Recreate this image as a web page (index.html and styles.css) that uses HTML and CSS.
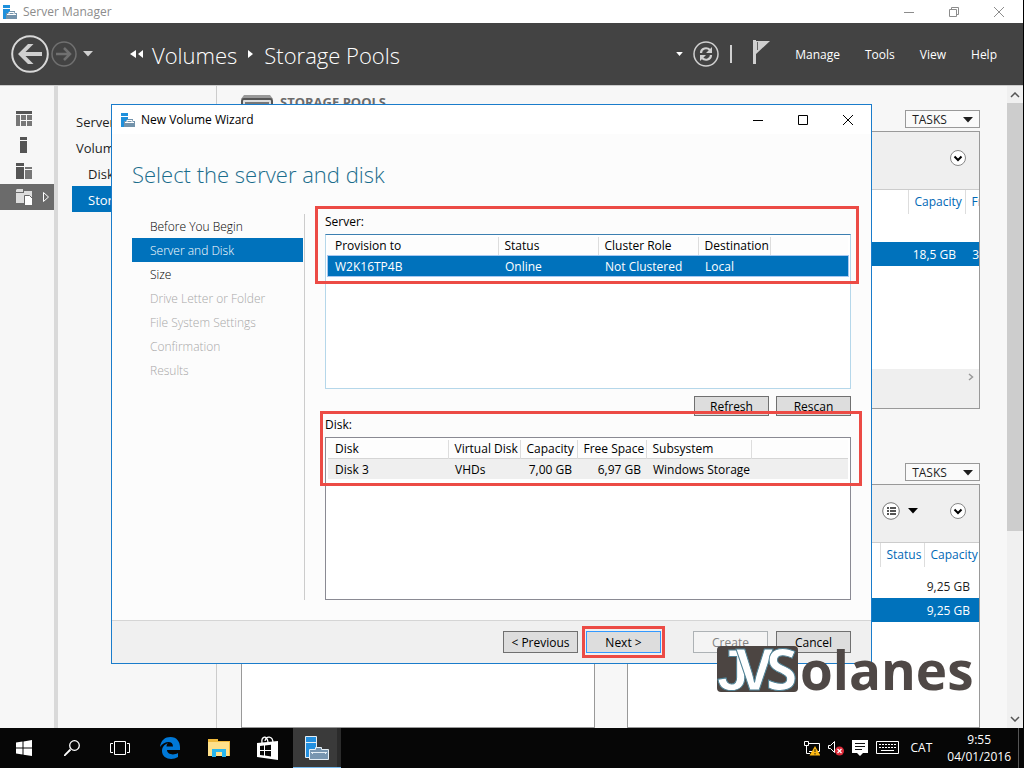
FILE: index.html
```html
<!DOCTYPE html>
<html lang="en">
<head>
<meta charset="utf-8">
<title>Server Manager</title>
<link rel="stylesheet" href="styles.css">
</head>
<body>
<svg class="defs" aria-hidden="true">
  <symbol id="logo" viewBox="0 0 14 14"><path fill="#1e90dc" d="M0 0h7v3H0zM0 4h7v3L3 9v5H0z"/><path fill="#7393ab" d="M3 8h3V6h6v2h2v6H3z"/><path stroke="#fff" fill="none" d="M4 9.500h9M6 9V7.500h5V9"/></symbol>
  <symbol id="tri" viewBox="0 0 10 6"><path fill="currentColor" d="M0 0h10L5 5.500z"/></symbol>
  <symbol id="chev" viewBox="0 0 16 16"><circle cx="8" cy="8" r="7.500" fill="#fff" stroke="#888"/><path d="M4.500 6.500 8 10l3.500-3.500" fill="none" stroke="#000" stroke-width="2"/></symbol>
</svg>
<div class="desktop">
  <div class="window">
    <header class="titlebar">
      <svg class="app-icon"><use href="#logo"/></svg>
      <span class="title">Server Manager</span>
      <div class="controls">
        <button aria-label="Minimize"><svg width="12" height="12"><path d="M1 6.500h10"/></svg></button>
        <button aria-label="Restore"><svg width="12" height="12"><path d="M1.500 3.500h7v7h-7zM3.500 3V1.500h7v7H9"/></svg></button>
        <button aria-label="Close"><svg width="12" height="12"><path d="m1 1 10 10M11 1 1 11"/></svg></button>
      </div>
    </header>
    <div class="topbar">
      <button class="back" aria-label="Back"><svg width="38" height="38"><circle cx="19" cy="19" r="17.800" fill="none" stroke="#d8d8d8" stroke-width="2"/><path fill="#d0d0d0" d="M31 17H14.500l8-8H17L7 19l10 10h5.500l-8-8H31z"/></svg></button>
      <button class="forward" aria-label="Forward"><svg width="26" height="26"><circle cx="13" cy="13" r="12" fill="none" stroke="#707070" stroke-width="1.500"/><path d="M5 13h14M13 7l6 6-6 6" fill="none" stroke="#707070" stroke-width="2.500"/></svg></button>
      <button class="history" aria-label="History"><svg width="10" height="6"><use href="#tri"/></svg></button>
      <nav class="crumbs">
        <svg width="14" height="8"><path fill="#fff" d="M6 0v8L0 4zM13 0v8L8 4z"/></svg>
        <a href="#">Volumes</a>
        <svg width="5" height="8"><path fill="#fff" d="M0 0v8l5-4z"/></svg>
        <a href="#">Storage Pools</a>
      </nav>
      <button class="small-drop" aria-label="Options"><svg width="7" height="4" viewBox="0 0 10 6"><path fill="#fff" d="M0 0h10L5 6z"/></svg></button>
      <button class="refresh" aria-label="Refresh"><svg width="26" height="26"><circle cx="13" cy="13" r="12" fill="none" stroke="#d0d0d0" stroke-width="1.500"/><path d="M8 12c0-5 6-6 9-3M18 14c0 5-6 6-9 3" fill="none" stroke="#d0d0d0" stroke-width="2.200"/><path fill="#d0d0d0" d="M19 6v6h-6zM7 20v-6h6z"/></svg></button>
      <span class="sep"></span>
      <button class="flag" aria-label="Notifications"><svg width="18" height="24"><path fill="#d0d0d0" d="M1 0h3v24H1zM4 1h14L4 14z"/><path stroke="#666" d="M5.500 2v8"/></svg></button>
      <nav class="menu"><a href="#">Manage</a><a href="#">Tools</a><a href="#">View</a><a href="#">Help</a></nav>
    </div>
    <div class="workspace">
      <aside class="rail">
        <button aria-label="Dashboard"><svg width="16" height="16"><path fill="#555" d="M0 0h16v3H0z"/><path fill="#777" d="M0 4h4v11H0zM5 4h5v5H5zM11 4h5v5h-5zM5 10h5v5H5zM11 10h5v5h-5z"/></svg></button>
        <button aria-label="Local server"><svg width="16" height="16"><path fill="#555" d="M4 0h7v3H4zM4 4h7v12H4z"/></svg></button>
        <button aria-label="All servers"><svg width="16" height="16"><path fill="#555" d="M0 0h8v3H0zM0 4h8v12H0z"/><path fill="#777" d="M9 4h7v2H9zM9 7h7v9H9z"/></svg></button>
        <button class="active" aria-label="File services"><svg width="16" height="16"><path fill="#ddd" d="M0 1 1 0h6v3H0zM0 4h8V2h8v12H0z"/><path fill="#fff" stroke="#666" d="M8.500 6.500h5l3 3v7h-8z"/></svg><svg class="rail-arrow" width="8" height="12"><path fill="none" stroke="#fff" d="M1.500 1.500v9L6.500 6z"/></svg></button>
      </aside>
      <nav class="sections">
        <a href="#">Servers</a><a href="#">Volumes</a><a class="sub" href="#">Disks</a><a class="sub selected" href="#">Storage Pools</a>
      </nav>
      <main class="tiles">
        <section class="tile pools">
          <div class="tile-head">
            <svg width="32" height="16"><path fill="#999" d="M3 0h26l3 4H0z"/><rect x="1" y="4" width="30" height="20" rx="2" fill="#ddd" stroke="#555" stroke-width="2"/><path stroke="#777" stroke-width="2" d="M4 8h24M4 12h24"/></svg>
            <h2>STORAGE POOLS</h2>
            <button class="tasks">TASKS <svg width="10" height="6"><use href="#tri"/></svg></button>
          </div>
          <div class="panel">
            <div class="toolbar"><button aria-label="Expand"><svg width="16" height="16"><use href="#chev"/></svg></button></div>
            <table>
              <colgroup><col><col class="c57"><col class="c14"></colgroup>
              <thead><tr><th></th><th>Capacity</th><th>Free</th></tr></thead>
              <tbody><tr class="gap"><td colspan="3"></td></tr><tr class="selected"><td></td><td>18,5 GB</td><td class="cut">3</td></tr></tbody>
            </table>
            <div class="hscroll"><svg width="6" height="8"><path d="m1 1 3.500 3L1 7" fill="none" stroke="#999" stroke-width="1.500"/></svg></div>
          </div>
        </section>
        <div class="lower">
          <section class="tile"><div class="tile-head"></div><div class="panel"></div></section>
          <section class="tile">
            <div class="tile-head"><button class="tasks">TASKS <svg width="10" height="6"><use href="#tri"/></svg></button></div>
            <div class="panel">
              <div class="toolbar">
                <button aria-label="List"><svg width="18" height="18"><circle cx="9" cy="9" r="8.300" fill="#fff" stroke="#777"/><path d="M5 6h2M8 6h6M5 9h2M8 9h6M5 12h2M8 12h6" stroke="#555" stroke-width="2"/></svg></button>
                <button class="list-drop" aria-label="List options"><svg width="10" height="6"><use href="#tri"/></svg></button>
                <button aria-label="Expand"><svg width="16" height="16"><use href="#chev"/></svg></button>
              </div>
              <table class="disks">
                <colgroup><col><col class="c44"><col class="c54"></colgroup>
                <thead><tr><th></th><th>Status</th><th>Capacity</th></tr></thead>
                <tbody><tr><td></td><td></td><td>9,25 GB</td></tr><tr class="selected"><td></td><td></td><td>9,25 GB</td></tr></tbody>
              </table>
            </div>
          </section>
        </div>
      </main>
      <div class="vscroll"><svg width="10" height="6"><path d="m1 5 4-4 4 4"/></svg><i></i><svg width="10" height="6"><path d="m1 1 4 4 4-4"/></svg></div>
    </div>
  </div>

  <div class="dialog" role="dialog" aria-label="New Volume Wizard">
    <header class="dialog-title">
      <svg class="app-icon"><use href="#logo"/></svg>
      <span>New Volume Wizard</span>
      <div class="controls">
        <button aria-label="Minimize"><svg width="12" height="12"><path d="M1 6.500h10"/></svg></button>
        <button aria-label="Maximize"><svg width="12" height="12"><path d="M1.500 1.500h9v9h-9z"/></svg></button>
        <button aria-label="Close"><svg width="12" height="12"><path d="m1 1 10 10M11 1 1 11"/></svg></button>
      </div>
    </header>
    <h1>Select the server and disk</h1>
    <div class="wizard">
      <ol class="steps">
        <li>Before You Begin</li><li class="current">Server and Disk</li><li>Size</li><li class="off">Drive Letter or Folder</li><li class="off">File System Settings</li><li class="off">Confirmation</li><li class="off">Results</li>
      </ol>
      <div class="form">
        <div class="mark mark-server"></div>
        <div class="mark mark-disk"></div>
        <p class="label" id="server-label">Server:</p>
        <div class="list server">
          <table aria-labelledby="server-label">
            <colgroup><col class="c170"><col class="c100"><col class="c100"><col class="c72"><col></colgroup>
            <thead><tr><th>Provision to</th><th>Status</th><th>Cluster Role</th><th>Destination</th><th></th></tr></thead>
            <tbody><tr><td>W2K16TP4B</td><td>Online</td><td>Not Clustered</td><td>Local</td><td></td></tr></tbody>
          </table>
        </div>
        <div class="actions"><button class="btn">Refresh</button><button class="btn">Rescan</button></div>
        <p class="label" id="disk-label">Disk:</p>
        <div class="list disk">
          <table aria-labelledby="disk-label">
            <colgroup><col class="c120"><col class="c72"><col class="c57"><col class="c69"><col class="c105"><col></colgroup>
            <thead><tr><th>Disk</th><th>Virtual Disk</th><th>Capacity</th><th>Free Space</th><th>Subsystem</th><th></th></tr></thead>
            <tbody><tr><td>Disk 3</td><td>VHDs</td><td class="num">7,00 GB</td><td class="num">6,97 GB</td><td>Windows Storage</td><td></td></tr></tbody>
          </table>
        </div>
      </div>
    </div>
    <footer class="dialog-foot">
      <button class="btn">&lt; Previous</button>
      <span class="next-wrap"><button class="btn next">Next &gt;</button></span>
      <button class="btn create" disabled>Create</button>
      <button class="btn">Cancel</button>
    </footer>
  </div>

  <svg class="watermark" width="260" height="60" role="img" aria-label="JVSolanes">
    <rect x="1" y="6" width="81" height="46" rx="4" fill="#4c4542"/>
    <g class="wm-light"><text class="wm-j" x="1" y="50">J</text><text x="20" y="50">V</text><text x="50" y="50">S</text></g>
    <text class="wm-dark" x="84" y="50">olanes</text>
  </svg>

  <div class="taskbar">
    <button aria-label="Start"><svg width="16" height="16"><path fill="#fff" d="m0 2.500 6.500-1v6H0zM7.500 1.400 16 0v7.500H7.500zM0 8.500h6.500v6l-6.500-1zM7.500 8.500H16V16l-8.500-1.200z"/></svg></button>
    <button aria-label="Search"><svg width="16" height="16"><path d="M6.500 9.500 0 16" stroke="#fff" stroke-width="1.800"/><circle cx="10.500" cy="5.500" r="4.800" fill="none" stroke="#fff" stroke-width="1.300"/></svg></button>
    <button aria-label="Task view"><svg width="20" height="14"><path d="M4.500.500h11v13h-11zM3 2.500H.500v9H3M17 2.500h2.500v9H17" fill="none" stroke="#fff"/></svg></button>
    <div class="apps">
      <button aria-label="Edge"><svg width="20" height="22"><path fill="#0078d7" d="M0 10C1 3 5 0 10.500 0 17 0 20 5 20 10v3H7c0 4 6 6 11 3v4c-6 4-16 2-16-6 0-4 2-6 6-8-1 1-1.500 2-1.500 3.500H13C13 3 4 4 0 10z"/></svg></button>
      <button aria-label="File Explorer"><svg width="22" height="18"><path fill="#f0b93c" d="M0 0h10v2h12v15H0z"/><path fill="#ffe08a" d="M0 3h21v14H0z"/><path fill="#28b6ed" d="M4 10h14v8h-4v-5H8v5H4z"/></svg></button>
      <button aria-label="Store"><svg width="22" height="24"><path d="M5 7C4 0 10-1 11 6M8 5c1-6 8-5 8 2" fill="none" stroke="#fff" stroke-width="1.300"/><path fill="#fff" d="m0 7 21-2v19L0 21z"/><path fill="#080808" d="m3 10 4-.500v4.500H3zM8 9.500l6-.700V14H8zM3 15h4v4.500L3 19zM8 15h6v5.500L8 19.600z"/></svg></button>
      <button class="open" aria-label="Server Manager"><svg width="24" height="24"><path fill="#2390e0" stroke="#e4eef5" d="M.500.500h11v21H.500z"/><path stroke="#e4eef5" d="M1 6.500h10"/><path fill="#7896b0" stroke="#e4eef5" d="M4.500 13.500h6v-2h6v2h7v10h-19z"/><path fill="none" stroke="#e4eef5" d="M6 16.500h16M7.500 16v2M20.500 16v2"/></svg></button>
    </div>
    <div class="tray">
      <svg width="16" height="16"><path d="M.500 1.500h4v4h-4zM2.500 6v7.500H6M5 3.500h10.500v8H5" fill="none" stroke="#fff"/><path fill="#fdb913" d="m11 6 5.500 9.500h-11z"/><path d="M11 9v3M11 13v1.500" stroke="#222"/></svg>
      <svg width="16" height="16"><path d="M.500 5.500h2l4-4v11l-4-4h-2z" fill="none" stroke="#fff"/><circle cx="11.500" cy="11" r="4.500" fill="#dc2a38"/><path d="m9.500 9 4 4M13.500 9l-4 4" stroke="#fff" stroke-width="1.200"/></svg>
      <svg width="16" height="16"><path fill="#fff" d="M0 0h16v13h-5l-3 3-3-3H0z"/><path d="M3 3.500h10M3 6.500h10M3 9.500h7" stroke="#111"/></svg>
      <svg width="23" height="14"><path d="M.500.500h22v12H.500z" fill="none" stroke="#fff"/><path d="M3 3.500h17M3 6.500h17" stroke="#fff" stroke-dasharray="2 1"/><path d="M5 9.500h13" stroke="#fff"/></svg>
      <span class="lang">CAT</span>
      <div class="clock">9:55<br>04/01/2016</div>
      <span class="peek"></span>
    </div>
  </div>
</div>
</body>
</html>
```
FILE: styles.css
```css
* { box-sizing: border-box; }
body { margin: 0; font: 12px/16px "Open Sans", "Noto Sans", sans-serif; color: #1e1e1e; background: #000; }
button { font: inherit; color: inherit; border: 0; background: none; padding: 0; display: flex; align-items: center; justify-content: center; }
a { color: inherit; text-decoration: none; }
h1, h2, p, ol { margin: 0; padding: 0; font-weight: 400; }
table { border-collapse: collapse; table-layout: fixed; width: 100%; }
th, td { padding: 0; font-weight: 400; text-align: left; white-space: nowrap; }
svg { flex: none; }
.defs { display: none; }

.desktop { position: relative; height: 100vh; display: flex; flex-direction: column; overflow: hidden; }
.window { flex: 1; min-height: 0; display: flex; flex-direction: column; background: #f7f7f7; margin-right: 1px; }
.titlebar { height: 23px; display: flex; align-items: center; background: #fff; padding-left: 3px; color: #8c8c8c; }
.app-icon { width: 14px; height: 14px; margin-right: 6px; }
.controls { margin-left: auto; display: flex; }
.controls button { width: 45px; height: 22px; }
.controls path { fill: none; stroke: currentColor; }
.titlebar .controls { margin-right: 2px; }

.topbar { height: 62px; background: #434343; color: #fff; display: flex; align-items: center; padding: 0 26px 0 11px; }
.forward { margin-left: 2px; }
.history { margin-left: 6px; color: #d0d0d0; }
.crumbs { display: flex; align-items: center; margin-left: 37px; font-size: 22px; line-height: 32px; font-weight: 300; white-space: nowrap; }
.crumbs a { padding-top: 2px; }
.crumbs a:first-of-type { margin: 0 11px 0 8px; }
.crumbs a:last-of-type { margin-left: 11px; }
.small-drop { margin-left: auto; }
.refresh { margin-left: 10px; }
.sep { width: 2px; height: 18px; background: #d0d0d0; margin: 0 20px 0 11px; }
.flag { margin-bottom: 4px; }
.menu { display: flex; gap: 25px; margin-left: 25px; padding-top: 2px; }

.workspace { flex: 1; min-height: 0; display: flex; border-top: 1px solid #ccc; }
.rail { width: 54px; padding-top: 20px; }
.rail button { width: 100%; height: 26px; padding: 0 4px 0 16px; justify-content: flex-start; }
.rail .active { background: #6b6b6b; justify-content: space-between; }
.sections { width: 163px; border-left: 4px solid #d9d9d9; border-right: 1px solid #ccc; padding: 22px 0 0 14px; font-size: 13px; }
.sections a { display: block; line-height: 24px; padding: 2px 0 0 4px; white-space: nowrap; }
.sections .sub { padding-left: 16px; }
.sections .selected, tr.selected { background: #0072bc; color: #fff; }
.tiles { flex: 1; min-width: 0; display: flex; flex-direction: column; padding: 0 27px 0 24px; }
.tile { min-width: 0; display: flex; flex-direction: column; }
.tile-head { display: flex; align-items: flex-end; height: 42px; }
.tile-head > svg { margin-bottom: 17px; }
.tile-head h2 { font-size: 13px; font-weight: 700; color: #6b6b6b; margin: 0 0 18px 7px; }
.tasks { width: 75px; height: 18px; margin-left: auto; border: 1px solid #999; background: #fafafa; gap: 16px; padding-top: 1px; }
.panel { flex: 1; min-height: 0; margin-top: 3px; border: 1px solid #999; background: #fff; display: flex; flex-direction: column; }
.pools { flex: none; }
.pools .panel { height: 278px; flex: none; }
.toolbar { height: 58px; flex: none; background: #efefef; border-bottom: 1px solid #ccc; display: flex; align-items: center; justify-content: flex-end; padding: 0 13px 5px 0; }
.list-drop { margin: 0 32px 0 8px; color: #000; }
.panel table { flex: none; }
.panel th { color: #0068b5; height: 24px; padding-left: 6px; border-left: 1px solid #ddd; overflow: hidden; }
.panel th:first-child { border: 0; }
.panel .gap td { height: 28px; }
.panel td { height: 24px; padding: 2px 9px 0 0; text-align: right; overflow: hidden; }
.panel td.cut { padding-right: 0; }
.disks thead::after { content: ""; display: block; height: 7px; }
.hscroll { margin-top: auto; height: 39px; flex: none; background: #efefef; display: flex; justify-content: flex-end; padding: 4px 5px; }
.lower { flex: 1; min-height: 0; display: grid; grid-template-columns: 1fr 1fr; column-gap: 32px; padding-top: 30px; }
.vscroll { width: 16px; background: #f0f0f0; display: flex; flex-direction: column; align-items: center; padding: 6px 0; justify-content: space-between; }
.vscroll i { width: 100%; height: 428px; margin: 5px 0 auto; background: #cdcdcd; }
.vscroll path { fill: none; stroke: #555; stroke-width: 1.5; }

.c14 { width: 14px; } .c44 { width: 44px; } .c54 { width: 55px; } .c57 { width: 57px; } .c69 { width: 69px; }
.c72 { width: 72px; } .c100 { width: 100px; } .c105 { width: 105px; } .c120 { width: 120px; } .c170 { width: 170px; }

.dialog { position: absolute; left: 111px; top: 104px; width: 761px; height: 560px; display: flex; flex-direction: column; background: #fcfcfc; border: 1px solid #1a7ccb; color: #000; }
.dialog-title { height: 29px; flex: none; display: flex; align-items: center; padding: 0 1px 0 9px; background: #fff; }
.dialog h1 { margin: 24px 0 0 20px; font-size: 22px; line-height: 32px; font-weight: 300; color: #1b6d8c; }
.wizard { flex: 1; min-height: 0; display: flex; padding: 24px 20px 20px; }
.steps { width: 173px; list-style: none; border-right: 1px solid #ccc; padding-right: 1px; font-weight: 300; }
.steps li { line-height: 22px; padding: 2px 0 0 18px; }
.steps .current { background: #0072bc; color: #fff; }
.steps .off { color: #a8a8a8; }
.form { position: relative; flex: 1; min-width: 0; margin-left: 20px; display: flex; flex-direction: column; }
.mark { position: absolute; border: 3px solid #ec4b45; z-index: 1; pointer-events: none; }
.mark-server { left: -10px; right: -8px; top: -8px; height: 78px; }
.mark-disk { left: -5px; right: -11px; top: 197px; height: 75px; }
.label { height: 20px; }
.list { border: 1px solid #8a8a93; background: #fff; padding: 2px; }
.list.server { height: 155px; border-color: #3c7fb1 #b5d7ea #b5d7ea; flex: none; }
.list.disk { flex: 1; min-height: 0; }
.list th { height: 18px; line-height: 18px; padding-left: 6px; border-right: 1px solid #ddd; background: #fdfdfd; }
.list th:first-child { padding-left: 7px; }
.list th:last-child { border-right: 0; }
.list thead tr { border-bottom: 1px solid #d5d5d5; }
.list td { height: 20px; padding: 2px 0 0 7px; }
.list td.num { text-align: right; padding-right: 5px; }
.server tbody { background: #0072bc; color: #fff; outline: 1px solid #a8c8f0; }
.disk tbody { background: #efefef; }
.actions { display: flex; justify-content: flex-end; gap: 7px; margin: 7px 0 1px; }
.btn { width: 75px; height: 20px; padding-top: 2px; border: 1px solid #707070; background: #ddd; }
.dialog-foot { height: 43px; flex: none; display: flex; align-items: center; justify-content: flex-end; background: #f0f0f0; border-top: 1px solid #d5d5d5; padding: 0 20px; }
.dialog-foot .btn { height: 22px; }
.next-wrap { border: 3px solid #ec4b45; padding: 2px 1px; margin: 0 28px 0 4px; }
.next { border-color: #3399ff; }
.create { margin-right: 8px; border-color: #adb2b5; background: #f4f4f4; color: #838383; }

.watermark { position: absolute; left: 716px; top: 640px; overflow: visible; }
.wm-light { font: 700 57px "Open Sans", sans-serif; fill: #fff; stroke: #4f8296; }
.wm-j { font-family: "Liberation Sans", sans-serif; }
.wm-dark { font: 700 53px "Open Sans", sans-serif; fill: #4f4846; }

.taskbar { height: 40px; flex: none; background: #060606; display: flex; color: #fff; }
.taskbar button { width: 48px; height: 40px; }
.apps { display: flex; gap: 1px; margin-left: 2px; }
.taskbar .open { background: #3a3a3a; border-bottom: 1px solid #76b9ed; box-shadow: inset -4px 0 #2b2b2b; }
.tray { margin-left: auto; display: flex; align-items: center; gap: 8px; }
.lang { margin-left: 4px; }
.clock { margin-left: 7px; text-align: center; line-height: 17px; }
.peek { width: 6px; margin-left: -1px; height: 100%; border-left: 1px solid #555; }
```
